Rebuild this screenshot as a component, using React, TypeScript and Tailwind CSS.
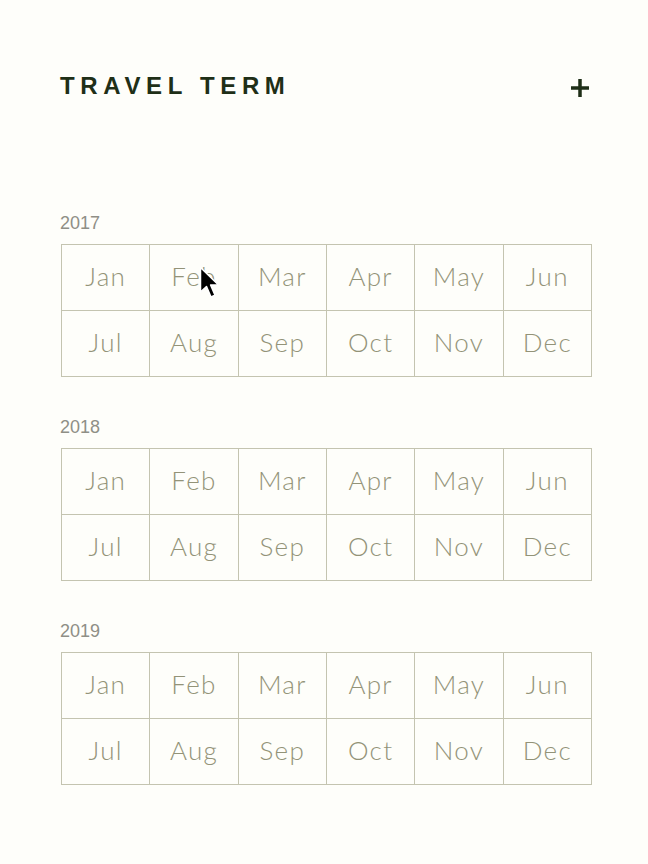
import { Fragment } from "react";

const months = ["Jan", "Feb", "Mar", "Apr", "May", "Jun", "Jul", "Aug", "Sep", "Oct", "Nov", "Dec"];
const years = [2017, 2018, 2019];

function Cursor() {
  return (
    <svg
      className="absolute left-[199px] top-[266px] pointer-events-none"
      width="22"
      height="34"
      viewBox="0 0 22 34"
    >
      <path
        d="M1.5 1.5 L1.5 26 L7.5 20.5 L12 31 L16 29.3 L11.6 19 L19.5 19 Z"
        fill="#000"
        stroke="#fff"
        strokeWidth="1.5"
        strokeLinejoin="round"
      />
    </svg>
  );
}

export default function App() {
  return (
    <div className="relative min-h-[864px] w-[648px] bg-[#fefefa] pl-[60px] pr-[57px] pt-[68px] font-['Liberation_Sans',Arial,sans-serif]">
      {/* 헤더 */}
      <div className="flex h-[36px] items-center justify-between pr-[1px]">
        <h1 className="text-[24px] font-bold tracking-[0.235em] text-[#1f2f17] leading-none">
          TRAVEL TERM
        </h1>
        <svg width="20" height="20" viewBox="0 0 20 20" className="mt-[4px]">
          <path d="M10 1 V19 M1 10 H19" stroke="#1f2f17" strokeWidth="3.5" />
        </svg>
      </div>

      {/* 연도별 월 그리드 */}
      <div className="mt-[109px] flex flex-col gap-[40px]">
        {years.map((year) => (
          <Fragment key={year}>
            <section>
              <p className="mb-[11px] text-[18px] leading-[20px] text-[#8f8f86]">{year}</p>
              <div className="ml-[1px] grid w-[531px] grid-cols-6 border-l border-t border-[#c4c4b0]">
                {months.map((m) => (
                  <div
                    key={m}
                    className="flex h-[66px] items-center justify-center border-b border-r border-[#c4c4b0] pb-[2px] font-['Lato','Open_Sans',sans-serif] text-[26px] font-light tracking-[0.05em] text-[#939378]"
                  >
                    {m}
                  </div>
                ))}
              </div>
            </section>
          </Fragment>
        ))}
      </div>

      <Cursor />
    </div>
  );
}
